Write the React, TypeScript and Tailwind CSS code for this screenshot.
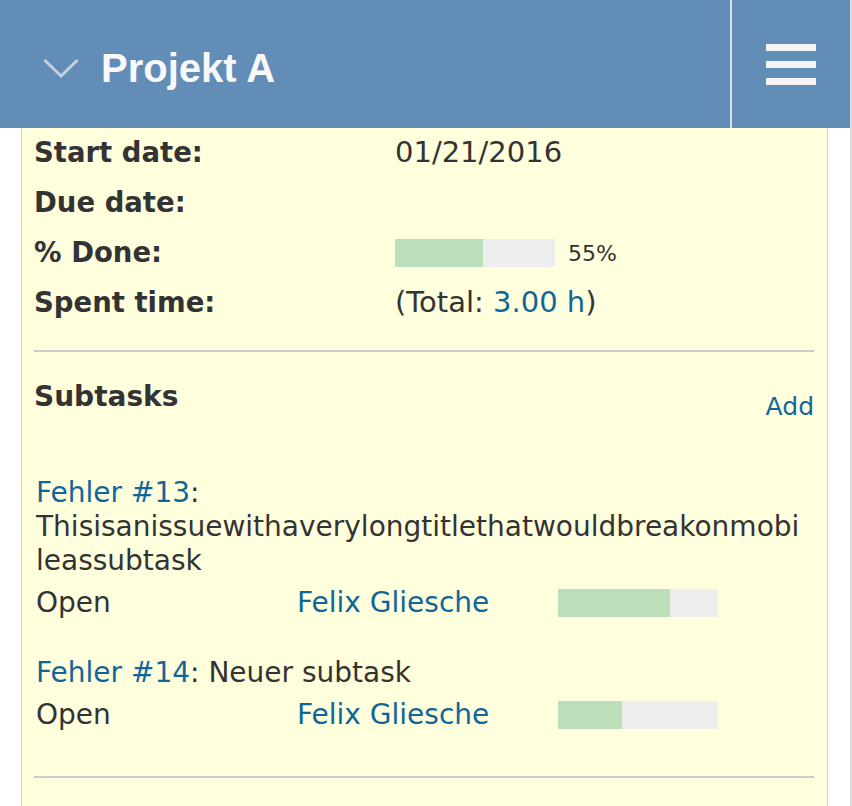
import React from "react";

type Subtask = {
  id: number;
  title: string;
  status: string;
  assignee: string;
  done: number;
};

const subtasks: Subtask[] = [
  {
    id: 13,
    title: "Thisisanissuewithaverylongtitlethatwouldbreakonmobileassubtask",
    status: "Open",
    assignee: "Felix Gliesche",
    done: 70,
  },
  { id: 14, title: "Neuer subtask", status: "Open", assignee: "Felix Gliesche", done: 40 },
];

function Progress({ value }: { value: number }) {
  return (
    <div className="flex h-[28px] w-[160px] bg-[#eeeeee]">
      <div className="h-full bg-[#bbdfba]" style={{ width: `${value}%` }} />
    </div>
  );
}

function App() {
  return (
    <div className="flex min-h-screen w-screen bg-white font-['DejaVu_Sans',sans-serif] text-[#333]">
      <div className="min-w-0 flex-1">
        {/* Header */}
        <div className="flex h-[128px] bg-[#628db7]">
          <div className="flex flex-1 items-center pl-[43px] pt-[8px]">
            <svg width="36" height="20" viewBox="0 0 36 20" className="mr-[22px]">
              <polyline
                points="1.5,2 18,18 34.5,2"
                fill="none"
                stroke="#c3d1de"
                strokeWidth="3"
              />
            </svg>
            <span className="font-['Liberation_Sans',sans-serif] text-[40px] font-bold leading-none text-[#f8f8f8]">
              Projekt A
            </span>
          </div>
          <div className="w-[2px] bg-[#d9dde2]" />
          <div className="flex w-[118px] flex-col items-center justify-center gap-[10px]">
            <div className="h-[7px] w-[50px] bg-[#f5f5f8]" />
            <div className="h-[7px] w-[50px] bg-[#f5f5f8]" />
            <div className="h-[7px] w-[50px] bg-[#f5f5f8]" />
          </div>
        </div>

        {/* Issue panel */}
        <div className="ml-[21px] mr-[22px] border-x border-[#d4d4d4] bg-[#ffffdd] pl-[12px] pr-[13px]">
          <div className="text-[29px]">
            <div className="flex h-[50px] items-center">
              <span className="w-[361px] text-[27.5px] font-bold">Start date:</span>
              <span>01/21/2016</span>
            </div>
            <div className="flex h-[50px] items-center">
              <span className="w-[361px] text-[27.5px] font-bold">Due date:</span>
            </div>
            <div className="flex h-[50px] items-center">
              <span className="w-[361px] text-[27.5px] font-bold">% Done:</span>
              <Progress value={55} />
              <span className="ml-[13px] text-[22px]">55%</span>
            </div>
            <div className="flex h-[50px] items-center">
              <span className="w-[361px] text-[27.5px] font-bold">Spent time:</span>
              <span>
                (Total: <a className="text-[#116699]">3.00 h</a>)
              </span>
            </div>
          </div>

          <div className="mt-[22px] h-[2px] bg-[#cccccc]" />

          <div className="mt-[28px] flex items-start justify-between">
            <span className="text-[28px] font-bold leading-[34px]">Subtasks</span>
            <a className="mt-[10px] text-[25px] leading-[34px] text-[#116699]">Add</a>
          </div>

          <div className="mt-[52px] flex min-w-0 flex-col gap-[33px] pl-[2px] pr-[10px] text-[28px]">
            {subtasks.map((t) => (
              <div key={t.id} className="min-w-0">
                <div className="leading-[34px] [overflow-wrap:anywhere]">
                  <a className="text-[#116699]">Fehler #{t.id}</a>: {t.title}
                </div>
                <div className="mt-[5px] flex h-[40px] items-center">
                  <span className="w-[261px]">{t.status}</span>
                  <a className="w-[261px] text-[#116699]">{t.assignee}</a>
                  <Progress value={t.done} />
                </div>
              </div>
            ))}
          </div>

          <div className="mt-[41px] h-[2px] bg-[#cccccc]" />
          <div className="h-[40px]" />
        </div>
      </div>
      <div className="w-[2px] bg-[#dcdcdc]" />
    </div>
  );
}

export default App;
